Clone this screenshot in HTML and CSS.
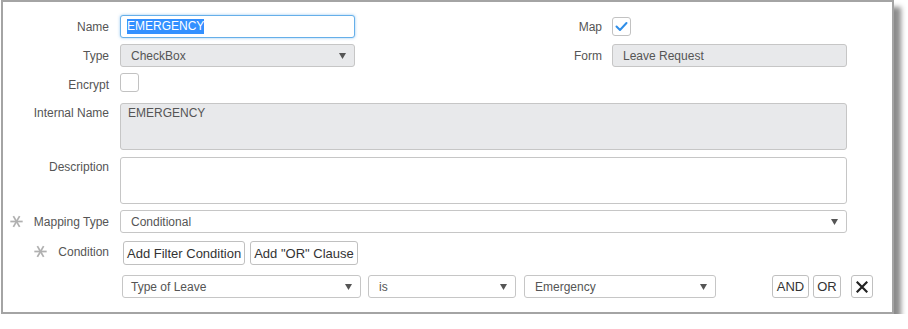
FILE: index.html
```html
<!DOCTYPE html>
<html>
<head>
<meta charset="utf-8">
<link rel="stylesheet" href="styles.css">
</head>
<body>
<div class="panel">
  <div class="row r-name">
    <div class="lbl">Name</div>
    <div class="field focus w235"><span class="selected">EMERGENCY</span></div>
    <div class="lbl2">Map</div>
    <div class="check"><svg width="19" height="19" viewBox="0 0 19 19"><path d="M4.5 9.5 L8 13 L14.5 6" fill="none" stroke="#2f8ee8" stroke-width="2" stroke-linecap="round" stroke-linejoin="round"/></svg></div>
  </div>
  <div class="row r-type">
    <div class="lbl">Type</div>
    <div class="field disabled select w235"><span>CheckBox</span><svg class="arrow" width="7" height="6" viewBox="0 0 7 6"><path d="M0 0 H7 L3.5 6 Z" fill="#555"/></svg></div>
    <div class="lbl2">Form</div>
    <div class="field disabled w235"><span>Leave Request</span></div>
  </div>
  <div class="row r-enc">
    <div class="lbl">Encrypt</div>
    <div class="check"></div>
  </div>
  <div class="row r-int">
    <div class="lbl top">Internal Name</div>
    <div class="area disabled">EMERGENCY</div>
  </div>
  <div class="row r-desc">
    <div class="lbl top">Description</div>
    <div class="area"></div>
  </div>
  <div class="row r-map">
    <div class="lbl"><svg class="ast" width="13" height="13" viewBox="0 0 12 12"><g stroke="#b0b0b0" stroke-width="1.6" stroke-linecap="butt"><path d="M0.3 6 H11.7"/><path d="M3.1 1 L8.9 11"/><path d="M8.9 1 L3.1 11"/></g></svg><span class="lt1">Mapping Type</span></div>
    <div class="field select wide"><span>Conditional</span><svg class="arrow" width="7" height="6" viewBox="0 0 7 6"><path d="M0 0 H7 L3.5 6 Z" fill="#555"/></svg></div>
  </div>
  <div class="row r-cond">
    <div class="lbl"><svg class="ast" width="13" height="13" viewBox="0 0 12 12"><g stroke="#b0b0b0" stroke-width="1.6" stroke-linecap="butt"><path d="M0.3 6 H11.7"/><path d="M3.1 1 L8.9 11"/><path d="M8.9 1 L3.1 11"/></g></svg><span class="lt2">Condition</span></div>
    <div class="btns">
      <button class="btn">Add Filter Condition</button>
      <button class="btn">Add "OR" Clause</button>
    </div>
  </div>
  <div class="row r-filter">
    <div class="field select s1"><span>Type of Leave</span><svg class="arrow" width="7" height="6" viewBox="0 0 7 6"><path d="M0 0 H7 L3.5 6 Z" fill="#555"/></svg></div>
    <div class="field select s2"><span>is</span><svg class="arrow" width="7" height="6" viewBox="0 0 7 6"><path d="M0 0 H7 L3.5 6 Z" fill="#555"/></svg></div>
    <div class="field select s3"><span>Emergency</span><svg class="arrow" width="7" height="6" viewBox="0 0 7 6"><path d="M0 0 H7 L3.5 6 Z" fill="#555"/></svg></div>
    <button class="btn sm and">AND</button>
    <button class="btn sm or">OR</button>
    <button class="btn sm x"><svg width="12" height="12" viewBox="0 0 12 12"><path d="M1.5 1.5 L10.5 10.5 M10.5 1.5 L1.5 10.5" stroke="#222" stroke-width="2.2" stroke-linecap="square"/></svg></button>
  </div>
</div>
</body>
</html>
```

FILE: styles.css
```css
* { box-sizing: border-box; }
html, body { margin: 0; padding: 0; background: #fff; }
body {
  font-family: "Liberation Sans", Arial, sans-serif;
  font-size: 12px;
  color: #555;
}
.panel {
  margin-left: 1px;
  width: 893px;
  height: 314px;
  border: 2px solid #a4a4a4;
  background: #fff;
  box-shadow: 7px 7px 5px rgba(0, 0, 0, 0.45);
  padding: 13px 44px 0 0;
  display: flex;
  flex-direction: column;
}
.row {
  display: flex;
  align-items: center;
}
.lbl {
  width: 106px;
  margin-right: 11px;
  text-align: right;
  flex: none;
  display: flex;
  align-items: center;
  justify-content: flex-end;
  color: #555;
}
.lbl.top { align-self: flex-start; padding-top: 3px; }
.lbl2 {
  width: 257px;
  flex: none;
  text-align: right;
  padding-right: 10px;
  color: #555;
}
.field {
  height: 23px;
  border: 1px solid #c6c6c6;
  border-radius: 3px;
  background: #fff;
  display: flex;
  align-items: center;
  padding: 0 8px 0 10px;
  color: #555;
  position: relative;
  flex: none;
}
.w235 { width: 235px; }
.wide { width: 727px; }
.field.disabled { background: #e8e9eb; }
.field.focus {
  border-color: #66afe9;
  box-shadow: 0 0 3px rgba(102, 175, 233, 0.7);
  padding-left: 6px;
}
.selected {
  background: #3390ff;
  color: #fff;
  line-height: 15px;
}
.select { justify-content: space-between; }
.arrow { flex: none; }
.check {
  width: 19px;
  height: 19px;
  border: 1px solid #c2c2c2;
  border-radius: 3px;
  background: #fff;
  flex: none;
}
.check svg { display: block; margin: -1px 0 0 -1px; }
.area {
  width: 727px;
  height: 47px;
  border: 1px solid #c6c6c6;
  border-radius: 3px;
  background: #fff;
  padding: 2px 7px;
  color: #555;
  flex: none;
}
.area.disabled { background: #e8e9eb; }
.r-name { height: 23px; }
.r-type { height: 23px; margin-top: 6px; }
.r-enc { height: 19px; margin-top: 6px; }
.r-enc .lbl { padding-top: 4px; }
.r-int { height: 47px; margin-top: 11px; }
.r-desc { height: 47px; margin-top: 7px; }
.r-map { height: 23px; margin-top: 6px; }
.r-cond { height: 24px; margin-top: 8px; }
.r-cond .lbl { padding-bottom: 3px; }
.r-filter { height: 23px; margin-top: 10px; padding-left: 119px; }
.ast { flex: none; }
.lt1 { margin-left: 11px; }
.lt2 { margin-left: 11px; }
.btns { display: flex; gap: 5px; margin-left: 3px; }
.btn {
  font-family: "Liberation Sans", Arial, sans-serif;
  font-size: 13px;
  color: #333;
  background: #fff;
  border: 1px solid #c0c0c0;
  border-radius: 3px;
  height: 24px;
  padding: 0 3px;
  margin: 0;
  display: flex;
  align-items: center;
  justify-content: center;
}
.s1 { width: 239px; padding-left: 8px; }
.s2 { width: 148px; margin-left: 7px; padding-left: 10px; }
.s3 { width: 192px; margin-left: 8px; padding-left: 10px; }
.btn.sm { height: 23px; font-size: 13px; padding: 0 4px; }
.and { width: 37px; margin-left: 56px; }
.or { width: 28px; margin-left: 4px; }
.x { width: 24px; margin-left: 10px; }
.x svg { display: block; }
```
